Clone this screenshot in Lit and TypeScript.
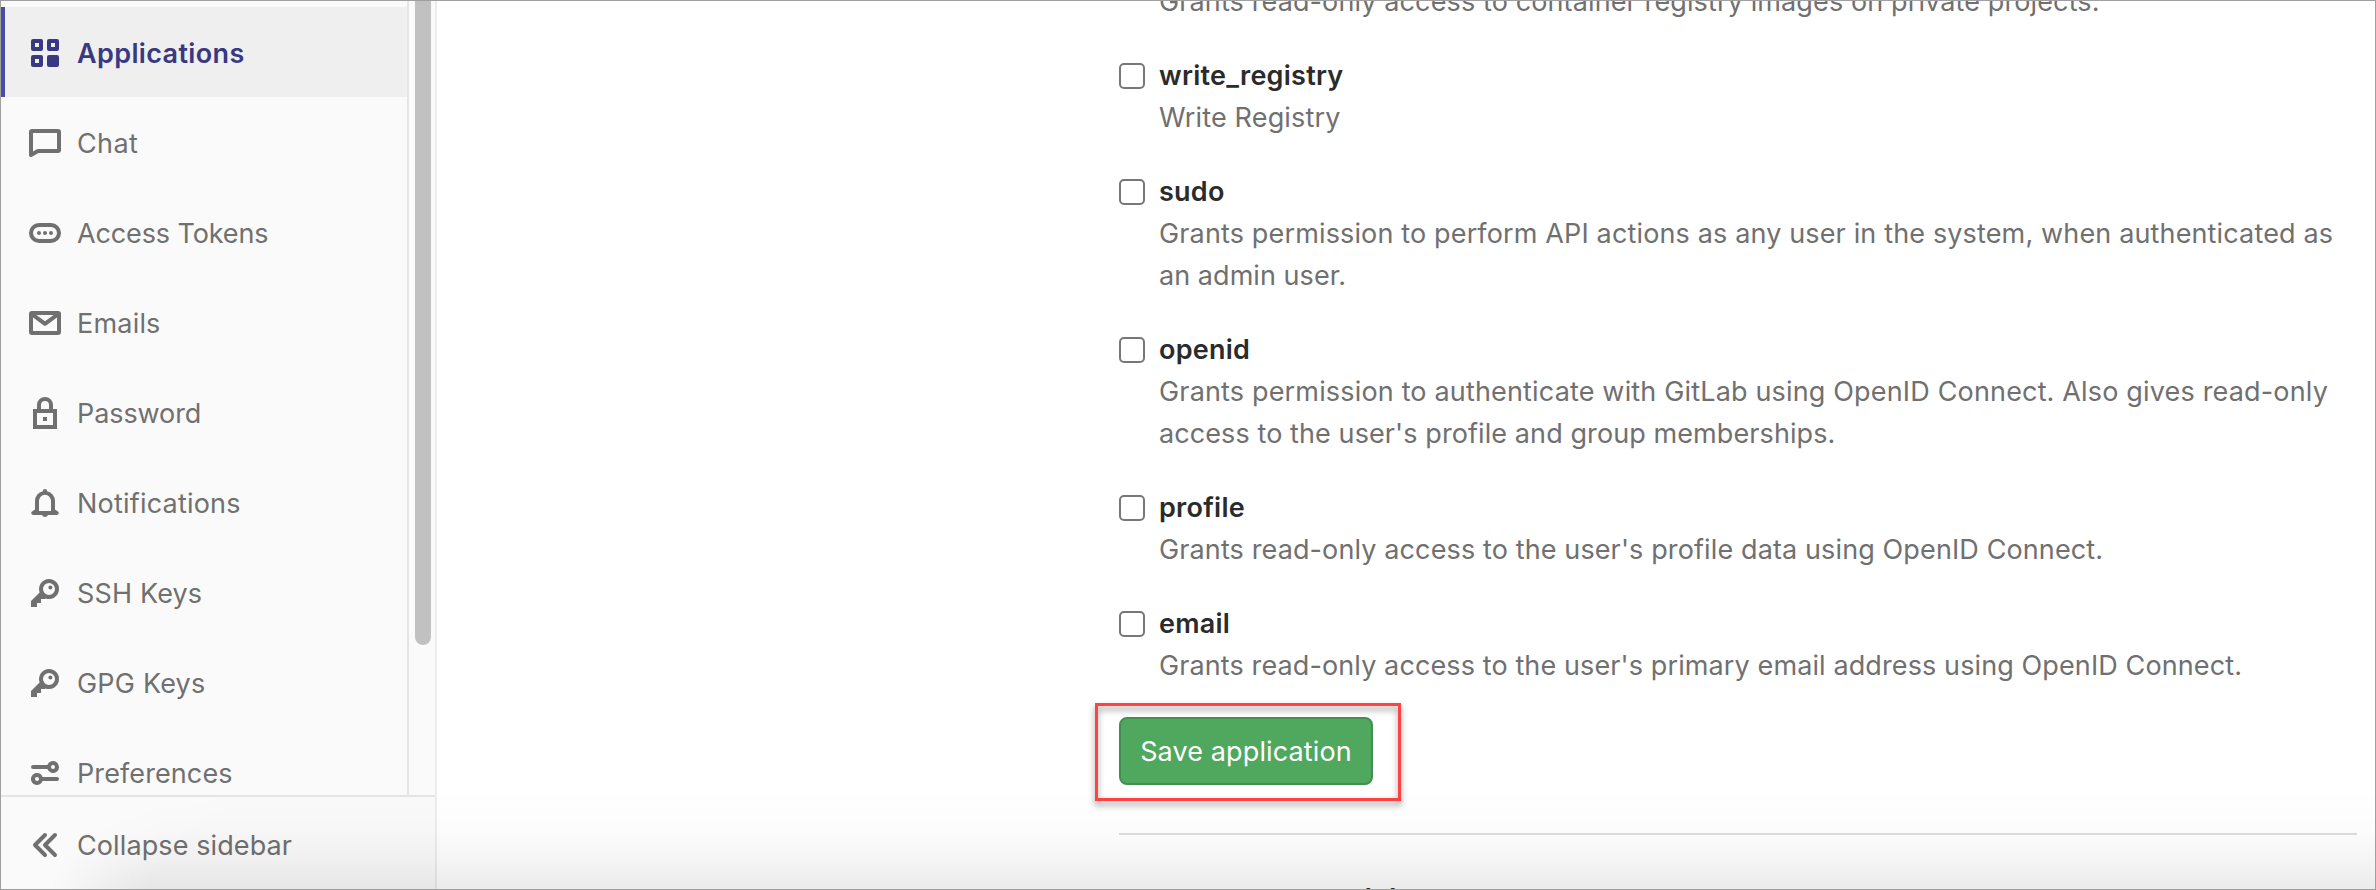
import { LitElement, html, css, svg, nothing } from "lit";
import { customElement, property } from "lit/decorators.js";
import { classMap } from "lit/directives/class-map.js";
import { styleMap } from "lit/directives/style-map.js";

const icons: Record<string, unknown> = {
  applications: svg`<path fill-rule="evenodd" d="M2 1h4a1 1 0 0 1 1 1v4a1 1 0 0 1-1 1H2a1 1 0 0 1-1-1V2a1 1 0 0 1 1-1Zm1 2v2h2V3H3Zm7-2h4a1 1 0 0 1 1 1v4a1 1 0 0 1-1 1h-4a1 1 0 0 1-1-1V2a1 1 0 0 1 1-1Zm1 2v2h2V3h-2ZM2 9h4a1 1 0 0 1 1 1v4a1 1 0 0 1-1 1H2a1 1 0 0 1-1-1v-4a1 1 0 0 1 1-1Zm1 2v2h2v-2H3Zm7-2h4a1 1 0 0 1 1 1v4a1 1 0 0 1-1 1h-4a1 1 0 0 1-1-1v-4a1 1 0 0 1 1-1Z"/>`,
  chat: svg`<path fill-rule="evenodd" d="M1.5 1h13A1.5 1.5 0 0 1 16 2.5v9a1.5 1.5 0 0 1-1.5 1.5H4.8l-3.3 1.9A1 1 0 0 1 0 14V2.5A1.5 1.5 0 0 1 1.500 1ZM2 3v9.2l1.700-.9a2 2 0 0 1 1-.3H14V3H2Z"/>`,
  token: svg`<path fill-rule="evenodd" d="M5 3h6a5 5 0 0 1 0 10H5A5 5 0 0 1 5 3Zm0 2a3 3 0 0 0 0 6h6a3 3 0 0 0 0-6H5Z"/><circle cx="5" cy="8" r="1"/><circle cx="8" cy="8" r="1"/><circle cx="11" cy="8" r="1"/>`,
  mail: svg`<path fill-rule="evenodd" d="M1.5 2h13A1.5 1.5 0 0 1 16 3.5v9a1.5 1.5 0 0 1-1.5 1.5h-13A1.5 1.5 0 0 1 0 12.5v-9A1.5 1.5 0 0 1 1.5 2ZM3.7 4 8 7.1 12.3 4ZM2 5.3V12h12V5.3L8.6 9.2a1 1 0 0 1-1.2 0Z"/>`,
  lock: svg`<path fill-rule="evenodd" d="M4 6V4a4 4 0 0 1 8 0v2h2v10H2V6h2Zm2 0h4V4a2 2 0 0 0-4 0v2ZM4 8v6h8V8H4Zm3 2h2v2H7v-2Z"/>`,
  bell: svg`<path fill-rule="evenodd" d="M8 1a1.1 1.1 0 0 1 1.1 1.1A5 5 0 0 1 13 7v4.2l1.300.9a1 1 0 0 1-.5 1.900H9.500a1.600 1.600 0 0 1-3 0H2.200a1 1 0 0 1-.5-1.900l1.300-.9V7a5 5 0 0 1 3.900-4.900A1.100 1.100 0 0 1 8 1Zm0 2.900A3 3 0 0 0 5 7v5h6V7a3 3 0 0 0-3-3.100Z"/>`,
  key: svg`<path fill-rule="evenodd" d="M10 1a5 5 0 1 1-1.7 9.7L8 11H6v2H4v2H1v-3l4.3-4.3A5 5 0 0 1 10 1Zm0 2a3 3 0 1 0 0 6 3 3 0 0 0 0-6Z"/><circle cx="10.7" cy="5.3" r="1"/>`,
  preferences: svg`<path fill-rule="evenodd" d="M2 4h7.2a3 3 0 1 1 0 2H2a1 1 0 0 1 0-2Zm10 0a1 1 0 1 0 0 2 1 1 0 0 0 0-2ZM4 8a3 3 0 0 1 2.8 2H14a1 1 0 0 1 0 2H6.800A3 3 0 1 1 4 8Zm0 2a1 1 0 1 0 0 2 1 1 0 0 0 0-2Z"/>`,
  collapse: svg`<path fill="none" stroke="currentColor" stroke-width="2" stroke-linecap="round" stroke-linejoin="round" d="M8 3 3 8l5 5M13 3 8 8l5 5"/>`,
};

const icon = (name: string) =>
  html`<svg class="icon" viewBox="0 0 16 16" fill="currentColor" aria-hidden="true">${icons[name]}</svg>`;

const tracked = (px: number) => styleMap({ letterSpacing: `${px}px` });

const links = [
  { icon: "applications", label: "Applications", tracking: 0.35, active: true },
  { icon: "chat", label: "Chat", tracking: 0.35 },
  { icon: "token", label: "Access Tokens", tracking: -0.12 },
  { icon: "mail", label: "Emails", tracking: 0.2 },
  { icon: "lock", label: "Password", tracking: -0.08 },
  { icon: "bell", label: "Notifications", tracking: 0.2 },
  { icon: "key", label: "SSH Keys", tracking: 0.15 },
  { icon: "key", label: "GPG Keys", tracking: 0.2 },
  { icon: "preferences", label: "Preferences", tracking: 0.1 },
];

const scopes: { name: string; lines: [string, number][] }[] = [
  { name: "write_registry", lines: [["Write Registry", 0.15]] },
  {
    name: "sudo",
    lines: [
      ["Grants permission to perform API actions as any user in the system, when authenticated as", 0.145],
      ["an admin user.", 0.05],
    ],
  },
  {
    name: "openid",
    lines: [
      ["Grants permission to authenticate with GitLab using OpenID Connect. Also gives read-only", 0.165],
      ["access to the user's profile and group memberships.", 0.09],
    ],
  },
  { name: "profile", lines: [["Grants read-only access to the user's profile data using OpenID Connect.", 0.12]] },
  { name: "email", lines: [["Grants read-only access to the user's primary email address using OpenID Connect.", 0.11]] },
];

@customElement("settings-sidebar")
export class SettingsSidebar extends LitElement {
  static styles = css`
    :host {
      display: flex;
      flex-direction: column;
      box-sizing: border-box;
      width: 436px;
      flex: none;
      border-right: 2px solid #ececec;
      background: #fafafa;
      color: #707070;
    }
    .scroller {
      display: flex;
      height: 794px;
      overflow: hidden;
    }
    .links {
      box-sizing: border-box;
      width: 408px;
      padding-top: 6px;
      border-right: 2px solid #e5e5e5;
    }
    .track {
      padding-left: 6px;
    }
    .thumb {
      width: 16px;
      height: 644px;
      border-radius: 0 0 8px 8px;
      background: #c1c1c1;
    }
    .link,
    .collapse {
      display: flex;
      align-items: center;
      box-sizing: border-box;
      gap: 16px;
      padding: 2px 0 0 28px;
      white-space: nowrap;
      line-height: 42px;
    }
    .link {
      height: 90px;
    }
    .active {
      padding-left: 24px;
      border-left: 4px solid #4b4ba3;
      background: #efefef;
      color: #393982;
      font-weight: 600;
    }
    .collapse {
      height: 94px;
      padding-top: 4px;
      border-top: 2px solid #e5e5e5;
    }
    .label {
      padding-top: 2px;
    }
    .icon {
      width: 32px;
      height: 32px;
      flex: none;
    }
  `;
  render() {
    return html`
      <div class="scroller">
        <nav class="links">
          ${links.map(
            (l) => html`<div class=${classMap({ link: true, active: !!l.active })}>
              ${icon(l.icon)}<span class="label" style=${tracked(l.tracking)}>${l.label}</span>
            </div>`,
          )}
        </nav>
        <div class="track"><div class="thumb"></div></div>
      </div>
      <div class="collapse">
        ${icon("collapse")}<span class="label" style=${tracked(0.1)}>Collapse sidebar</span>
      </div>
    `;
  }
}

@customElement("scope-option")
export class ScopeOption extends LitElement {
  @property() name = "";
  @property({ attribute: false }) lines: [string, number][] = [];
  static styles = css`
    :host {
      display: grid;
      grid-template-columns: 26px auto;
      column-gap: 14px;
      line-height: 42px;
      white-space: nowrap;
    }
    .box {
      box-sizing: border-box;
      width: 26px;
      height: 26px;
      margin-top: 8px;
      border: 2px solid #777;
      border-radius: 5px;
      background: #fff;
    }
    .name {
      color: #2b2b2b;
      font-weight: 600;
      letter-spacing: 0.25px;
    }
    .line {
      grid-column: 2;
      color: #707070;
    }
  `;
  render() {
    return html`
      ${this.name ? html`<span class="box"></span><span class="name">${this.name}</span>` : nothing}
      ${this.lines.map(([text, t]) => html`<span class="line" style=${tracked(t)}>${text}</span>`)}
    `;
  }
}

@customElement("app-root")
export class AppRoot extends LitElement {
  static styles = css`
    :host {
      display: flex;
      position: relative;
      box-sizing: border-box;
      width: 2376px;
      height: 890px;
      overflow: hidden;
      border: 1px solid #a0a0a0;
      background: #fff;
      font: 400 27px/42px Inter, "Liberation Sans", sans-serif;
    }
    .content {
      flex: 1;
      min-width: 0;
      padding: 0 18px 0 682px;
    }
    .scopes {
      display: flex;
      flex-direction: column;
      gap: 32px;
      margin-top: -20px;
    }
    .action {
      position: relative;
      width: 254px;
      margin-top: 30px;
    }
    .save {
      display: block;
      box-sizing: border-box;
      width: 254px;
      height: 68px;
      padding: 2px 0 0;
      border: 2px solid #428f50;
      border-radius: 8px;
      background: #50a75e;
      color: #fff;
      font: inherit;
      letter-spacing: 0.12px;
      white-space: nowrap;
    }
    .marker {
      position: absolute;
      inset: -14px -28px -16px -24px;
      border: 3px solid #ff4343;
      filter: drop-shadow(0 4px 3px rgba(0, 0, 0, 0.42));
    }
    .rule {
      height: 2px;
      margin-top: 48px;
      background: #dedede;
    }
    .heading {
      margin: 45px 0 0;
      color: #2b2b2b;
      font-size: 28px;
      font-weight: 600;
      line-height: 42px;
      white-space: nowrap;
    }
    .shade {
      position: absolute;
      inset: auto 0 0 0;
      height: 100px;
      pointer-events: none;
      background: linear-gradient(
        to bottom,
        rgba(0, 0, 0, 0),
        rgba(0, 0, 0, 0.012) 40%,
        rgba(0, 0, 0, 0.04) 70%,
        rgba(0, 0, 0, 0.08)
      );
      mask-image: radial-gradient(ellipse 330px 130px at 380px 100%, #000 70%, transparent),
        linear-gradient(to right, transparent 330px, #000 430px);
    }
  `;
  render() {
    return html`
      <settings-sidebar></settings-sidebar>
      <main class="content">
        <div class="scopes">
          <scope-option
            .lines=${[["Grants read-only access to container registry images on private projects.", 0.12]]}
          ></scope-option>
          ${scopes.map((s) => html`<scope-option .name=${s.name} .lines=${s.lines}></scope-option>`)}
        </div>
        <div class="action">
          <button class="save">Save application</button>
          <div class="marker"></div>
        </div>
        <div class="rule"></div>
        <h2 class="heading">Your applications (0)</h2>
      </main>
      <div class="shade"></div>
    `;
  }
}
